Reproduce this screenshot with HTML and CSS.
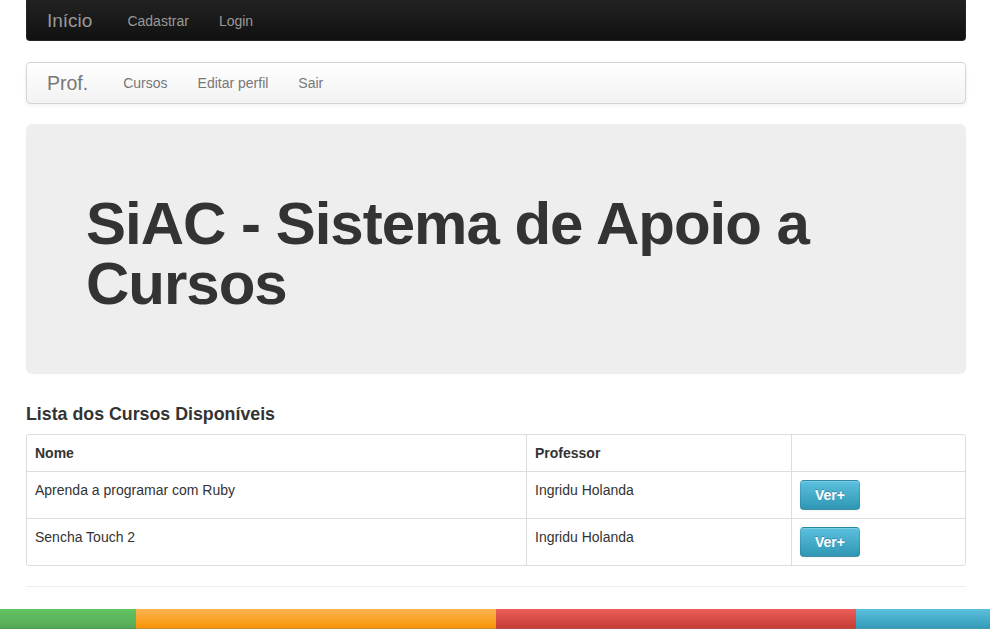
FILE: index.html
```html
<!DOCTYPE html>
<html lang="pt">
<head>
<meta charset="utf-8">
<title>SiAC</title>
<link rel="stylesheet" href="styles.css">
</head>
<body>
<div class="container">
  <div class="navbar navbar-inverse">
    <a class="brand" href="#">Início</a>
    <ul class="nav">
      <li><a href="#">Cadastrar</a></li>
      <li><a href="#">Login</a></li>
    </ul>
  </div>
  <div class="navbar navbar-light">
    <a class="brand" href="#">Prof.</a>
    <ul class="nav">
      <li><a href="#">Cursos</a></li>
      <li><a href="#">Editar perfil</a></li>
      <li><a href="#">Sair</a></li>
    </ul>
  </div>
  <div class="hero-unit">
    <h1>SiAC - Sistema de Apoio a Cursos</h1>
  </div>
  <h4 class="section-title">Lista dos Cursos Disponíveis</h4>
  <table class="table">
    <thead>
      <tr><th class="col-name">Nome</th><th class="col-prof">Professor</th><th></th></tr>
    </thead>
    <tbody>
      <tr><td>Aprenda a programar com Ruby</td><td>Ingridu Holanda</td><td><a class="btn" href="#">Ver+</a></td></tr>
      <tr><td>Sencha Touch 2</td><td>Ingridu Holanda</td><td><a class="btn" href="#">Ver+</a></td></tr>
    </tbody>
  </table>
  <hr class="rule">
</div>
<div class="colorbar">
  <div class="seg seg-green"></div>
  <div class="seg seg-orange"></div>
  <div class="seg seg-red"></div>
  <div class="seg seg-blue"></div>
</div>
</body>
</html>
```
FILE: styles.css
```css
* { box-sizing: border-box; }
html, body { margin: 0; padding: 0; }
body {
  font-family: "Liberation Sans", Arial, Helvetica, sans-serif;
  font-size: 14px;
  line-height: 20px;
  color: #333;
  background: #fff;
}
a { text-decoration: none; }
.container {
  width: 940px;
  margin: 0 0 0 26px;
}
.navbar {
  display: flex;
  align-items: center;
  height: 41px;
  padding: 0 20px;
  margin-bottom: 21px;
  border-radius: 4px;
}
.navbar-inverse {
  background: linear-gradient(#222, #111);
  border: 1px solid #252525;
  border-top: 0;
  border-radius: 0 0 4px 4px;
  padding-top: 1px;
}
.navbar-light {
  background: linear-gradient(#ffffff, #f2f2f2);
  border: 1px solid #d4d4d4;
  box-shadow: 0 1px 4px rgba(0,0,0,0.065);
  height: 42px;
  margin-bottom: 20px;
}
.brand {
  font-size: 19px;
  line-height: 20px;
  padding: 10px 20px;
  margin-left: -20px;
  font-weight: 200;
}
.navbar-inverse .brand { color: #999; }
.navbar-light .brand { color: #777; font-size: 19.5px; }
.nav {
  display: flex;
  list-style: none;
  margin: 0;
  padding: 0;
}
.nav a {
  display: block;
  padding: 10px 15px;
  line-height: 20px;
}
.navbar-inverse .nav a { color: #999; }
.navbar-light .nav a { color: #777; }
.hero-unit {
  background: #eee;
  border-radius: 6px;
  padding: 60px;
  height: 250px;
  margin-bottom: 30px;
}
.hero-unit h1 {
  margin: 10px 0 0;
  font-size: 60px;
  line-height: 60px;
  font-weight: bold;
  letter-spacing: -1px;
  color: #333;
}
.section-title {
  font-size: 17.8px;
  line-height: 20px;
  margin: 10px 0;
  font-weight: bold;
}
.table {
  width: 100%;
  border-collapse: separate;
  border-spacing: 0;
  border: 1px solid #ddd;
  border-left: 0;
  border-radius: 4px;
  margin-bottom: 20px;
}
.table th, .table td {
  padding: 8px;
  text-align: left;
  vertical-align: top;
  line-height: 20px;
  border-left: 1px solid #ddd;
  border-top: 1px solid #ddd;
}
.table thead th { border-top: 0; font-weight: bold; }
.col-name { width: 500px; }
.col-prof { width: 265px; }
.btn {
  display: inline-block;
  padding: 4px 12px;
  width: 60px;
  text-align: center;
  line-height: 20px;
  color: #fff;
  font-weight: bold;
  font-size: 14px;
  text-shadow: 0 -1px 0 rgba(0,0,0,0.25);
  background: linear-gradient(#5bc0de, #2f96b4);
  border: 1px solid #2a85a0;
  border-color: rgba(0,0,0,0.1) rgba(0,0,0,0.1) rgba(0,0,0,0.25);
  border-radius: 4px;
  box-shadow: inset 0 1px 0 rgba(255,255,255,0.2), 0 1px 2px rgba(0,0,0,0.05);
}
.rule {
  margin: 0 0 21px;
  border: 0;
  border-top: 1px solid #eee;
  border-bottom: 1px solid #fff;
}
.colorbar {
  display: flex;
  height: 20px;
}
.seg { height: 20px; border-bottom: 1px solid rgba(0,0,0,0.2); }
.seg-green { width: 136px; background: linear-gradient(#62c462, #57a957); }
.seg-orange { width: 360px; background: linear-gradient(#fbb450, #f89406); }
.seg-red { width: 360px; background: linear-gradient(#ee5f5b, #c43c35); }
.seg-blue { flex: 1; background: linear-gradient(#5bc0de, #339bb9); }
```
